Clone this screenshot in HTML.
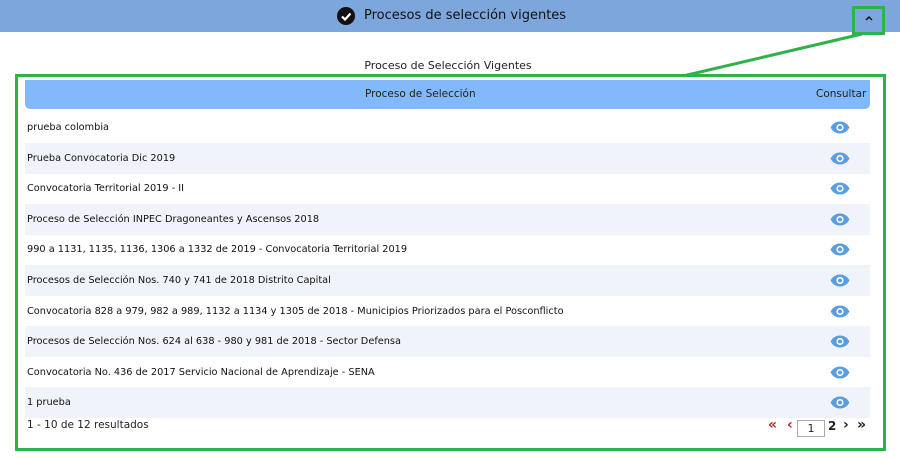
<!DOCTYPE html>
<html><head><meta charset="utf-8"><style>
body{margin:0;width:900px;height:460px;background:#fff;font-family:"DejaVu Sans","Liberation Sans",sans-serif;position:relative;overflow:hidden;color:#222}
.top{position:absolute;left:0;top:0;width:900px;height:32px;background:#7da7dc}
.top .t{position:absolute;left:364px;top:8px;font-size:13px;color:#111}
.chk{position:absolute;left:337px;top:7px;width:18px;height:18px;border-radius:50%;background:#111}
.g{position:absolute;border:3px solid #2db34a;box-sizing:border-box}
.cap{position:absolute;left:-2px;width:900px;text-align:center;top:59px;font-size:11px}
.hd{position:absolute;left:25px;top:80px;width:845px;height:29px;background:#82b9fa;border-radius:0 0 5px 5px;font-size:10.5px}
.row{position:absolute;left:25px;width:845px;height:31px;font-size:9.75px;line-height:31px;color:#111}
.row span{position:absolute;left:2px}
.row.a{background:#f0f4fa}
.eye{position:absolute;left:805px;top:9px}
.p{position:absolute;top:417px;font-size:14px;font-weight:bold}
</style></head><body>
<div class="top"><div class="chk"><svg width="18" height="18"><path d="M5 9.5l3 3 5.5-6" stroke="#fff" stroke-width="2.2" fill="none"/></svg></div><div class="t">Procesos de selección vigentes</div>
<svg style="position:absolute;left:865px;top:15px" width="8" height="6"><path d="M1 5l3-3 3 3" stroke="#111" stroke-width="1.5" fill="none"/></svg></div>
<div class="g" style="left:852px;top:6px;width:33px;height:29px"></div>
<svg style="position:absolute;left:0;top:0" width="900" height="460"><line x1="862" y1="34" x2="683" y2="76" stroke="#2db34a" stroke-width="3"/></svg>
<div class="cap">Proceso de Selección Vigentes</div>
<div class="g" style="left:15px;top:74px;width:871px;height:377px"></div>
<div class="hd"><span style="position:absolute;left:340px;top:8px">Proceso de Selección</span><span style="position:absolute;left:791px;top:8px">Consultar</span></div>
<div id="rows"></div>
<div style="position:absolute;left:27px;top:419px;font-size:10.5px">1 - 10 de 12 resultados</div>
<div class="p" style="left:768px;color:#b22;letter-spacing:-2px">«</div>
<div class="p" style="left:787px;color:#b22">‹</div>
<div style="position:absolute;left:797px;top:420px;width:26px;height:15px;border:1px solid #aaa;font-size:11px;text-align:center;line-height:15px">1</div>
<div class="p" style="left:828px;top:419px;font-size:12px">2</div>
<div class="p" style="left:843px">›</div>
<div class="p" style="left:857px;letter-spacing:-2px">»</div>
<script>
var t=["prueba colombia","Prueba Convocatoria Dic 2019","Convocatoria Territorial 2019 - II","Proceso de Selección INPEC Dragoneantes y Ascensos 2018","990 a 1131, 1135, 1136, 1306 a 1332 de 2019 - Convocatoria Territorial 2019","Procesos de Selección Nos. 740 y 741 de 2018 Distrito Capital","Convocatoria 828 a 979, 982 a 989, 1132 a 1134 y 1305 de 2018 - Municipios Priorizados para el Posconflicto","Procesos de Selección Nos. 624 al 638 - 980 y 981 de 2018 - Sector Defensa","Convocatoria No. 436 de 2017 Servicio Nacional de Aprendizaje - SENA","1 prueba"];
var h="";t.forEach(function(s,i){h+='<div class="row'+(i%2?' a':'')+'" style="top:'+(112+i*30.6)+'px"><span>'+s+'</span><svg class="eye" width="20" height="13" viewBox="0 0 20 13"><path d="M0.5 6.5C3 2 6.5 0.5 10 0.5S17 2 19.5 6.5C17 11 13.5 12.5 10 12.5S3 11 0.5 6.5Z" fill="#5b9ee0"/><circle cx="10" cy="6.5" r="3.6" fill="#fff"/><circle cx="10" cy="6.5" r="2" fill="#5b9ee0"/></svg></div>'});
document.getElementById("rows").innerHTML=h;
</script>
</body></html>
